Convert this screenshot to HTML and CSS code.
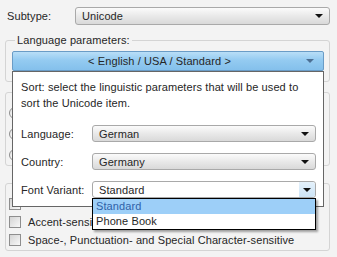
FILE: index.html
```html
<!DOCTYPE html>
<html lang="en">
<head>
    <meta charset="UTF-8">
    <title>Unicode sort parameters</title>
    <link rel="stylesheet" href="styles.css">
</head>
<body>
    <div class="page">
        <div class="row">
            <span class="row-label">Subtype:</span>
            <div class="select">
                <span>Unicode</span>
                <span class="arrow"></span>
            </div>
        </div>

        <fieldset class="group">
            <legend>Language parameters:</legend>
            <div class="lang-button">
                <span>&lt; English / USA / Standard &gt;</span>
                <span class="arrow"></span>
            </div>
        </fieldset>

        <!-- covered by the popup, only the left edge shows -->
        <fieldset class="group group-strength">
            <legend class="accent"><span class="accent-mark"></span></legend>
            <div class="radio-row"><span class="radio"></span></div>
            <div class="radio-row"><span class="radio"></span></div>
            <div class="radio-row"><span class="radio"></span></div>
        </fieldset>

        <fieldset class="group group-checks">
            <div class="check-row"><span class="check"></span></div>
            <div class="check-row"><span class="check"></span>Accent-sensitive</div>
            <div class="check-row"><span class="check"></span>Space-, Punctuation- and Special Character-sensitive</div>
        </fieldset>

        <!-- popup opened from the language button -->
        <div class="popup">
            <p class="popup-text">Sort: select the linguistic parameters that will be used to sort the Unicode item.</p>

            <div class="popup-row">
                <span class="popup-label">Language:</span>
                <div class="select">
                    <span>German</span>
                    <span class="arrow"></span>
                </div>
            </div>

            <div class="popup-row">
                <span class="popup-label">Country:</span>
                <div class="select">
                    <span>Germany</span>
                    <span class="arrow"></span>
                </div>
            </div>

            <div class="popup-row">
                <span class="popup-label">Font Variant:</span>
                <div class="select select-open">
                    <span>Standard</span>
                    <span class="arrow-box"><span class="arrow"></span></span>
                    <ul class="dropdown">
                        <li class="selected">Standard</li>
                        <li>Phone Book</li>
                    </ul>
                </div>
            </div>
        </div>
    </div>
</body>
</html>
```

FILE: styles.css
```css
* {
    margin: 0;
    padding: 0;
    box-sizing: border-box;
}

body {
    font-family: 'Liberation Sans', Arial, sans-serif;
    font-size: 11px;
    letter-spacing: 0.1px;
    color: #262626;
    background: #f3f3f3;
}

.page {
    position: relative;
    width: 337px;
    height: 257px;
    padding: 7px 7px 0 5px;
    overflow: hidden;
}

.row {
    display: flex;
    align-items: center;
    padding-left: 2px;
}

.row-label {
    width: 68px;
}

.select {
    position: relative;
    flex: 1;
    height: 18px;
    display: flex;
    align-items: center;
    padding-left: 6px;
    border: 1px solid #a9a9a9;
    border-radius: 3px;
    background: linear-gradient(#fbfbfb, #e9e9e9 50%, #d9d9d9);
}

.select > span:first-child {
    flex: 1;
}

.arrow {
    display: inline-block;
    width: 0;
    height: 0;
    margin-right: 6px;
    border-left: 4px solid transparent;
    border-right: 4px solid transparent;
    border-top: 4px solid #111;
}

.group {
    margin-top: 9px;
    border: 1px solid #d4d4d4;
    border-radius: 3px;
    padding: 4px 5px 10px 6px;
}

.group legend {
    margin-left: 3px;
    padding: 0 2px;
    line-height: 13px;
}

.accent-mark {
    display: inline-block;
    width: 3px;
    height: 6px;
    margin-top: 4px;
    background: #e8924a;
}

.lang-button {
    height: 20px;
    display: flex;
    align-items: center;
    border: 1px solid #6a9cc6;
    border-radius: 2px;
    background: linear-gradient(#b9def7, #94cbf1 45%, #84c0ec);
}

.lang-button > span:first-child {
    flex: 1;
    text-align: center;
}

.lang-button .arrow {
    margin-right: 9px;
    border-top-color: #4c6f93;
}

.group-strength {
    margin-top: 4px;
    height: 80px;
    padding: 3px 3px 0;
}

.radio-row {
    display: flex;
    align-items: center;
    height: 21px;
}

.radio {
    width: 12px;
    height: 12px;
    border: 1px solid #8e8e8e;
    border-radius: 50%;
    background: linear-gradient(#e2e2e2, #fafafa);
}

.group-checks {
    margin-top: 17px;
    height: 68px;
    padding: 11px 3px 0;
}

.check-row {
    display: flex;
    align-items: center;
    gap: 7px;
    height: 18px;
}

.check {
    width: 12px;
    height: 12px;
    border: 1px solid #8e8e8e;
    background: linear-gradient(135deg, #d4d4d4, #f8f8f8);
}

.popup {
    position: absolute;
    left: 12px;
    top: 71px;
    width: 312px;
    height: 136px;
    padding: 7px 7px 0 8px;
    background: #fff;
    border: 1px solid #666;
}

.popup-text {
    line-height: 16px;
    padding-right: 10px;
    margin-bottom: 14px;
}

.popup-row {
    display: flex;
    align-items: center;
    margin-bottom: 11px;
}

.popup-row .select {
    height: 17px;
}

.popup-label {
    width: 71px;
}

.select-open {
    background: #fff;
}

.arrow-box {
    display: flex;
    align-items: center;
    justify-content: center;
    align-self: stretch;
    width: 16px;
    border-radius: 0 3px 3px 0;
    background: linear-gradient(#e4f1fb, #cde4f6);
}

.arrow-box .arrow {
    margin: 0;
}

.dropdown {
    position: absolute;
    left: -1px;
    right: -1px;
    top: 16px;
    list-style: none;
    background: #fff;
    border: 1px solid #000;
    box-shadow: 2px 2px 2px rgba(0, 0, 0, 0.35);
}

.dropdown li {
    height: 15px;
    line-height: 15px;
    padding-left: 3px;
}

.dropdown .selected {
    background: #9dcff8;
    color: #2f62a8;
}
```
